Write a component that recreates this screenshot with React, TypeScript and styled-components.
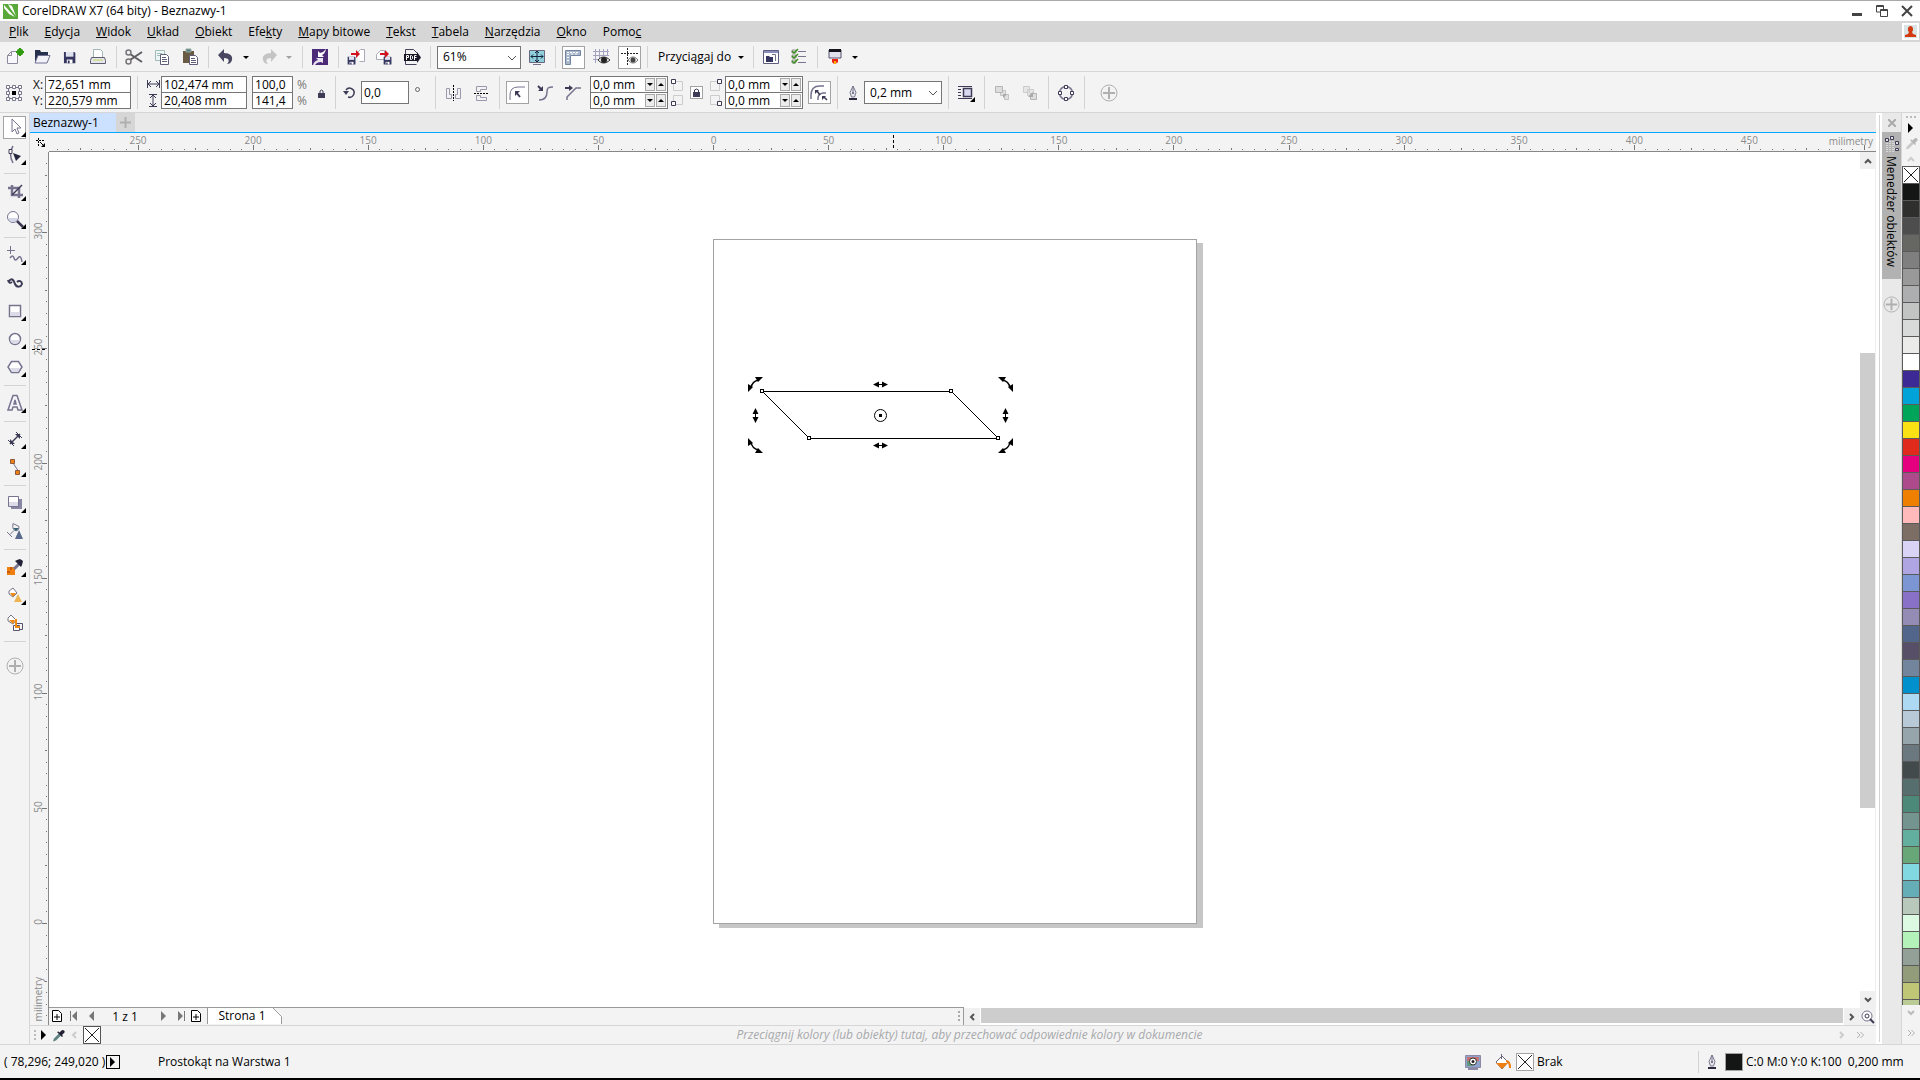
import React from "react";
import styled, { createGlobalStyle, css } from "styled-components";

const font = `"Open Sans", "Noto Sans", sans-serif`;
const ink = "#3d3b56";
const mid = "#77738f";
const pale = "#dcdce8";

const GlobalStyle = createGlobalStyle`
  *, *::before, *::after { box-sizing: border-box; }
  body { margin: 0; background: #f3f3f3; color: #000; font: 12px/16px ${font}; }
  button, input, select { font: inherit; color: inherit; margin: 0; padding: 0; border: 0; background: none; border-radius: 0; }
  svg { display: block; flex: none; }
`;

/* ---------- shell ---------- */

const Shell = styled.div`
  display: flex;
  flex-direction: column;
  height: 100vh;
  overflow: hidden;
  border-top: 1px solid #a9a9a9;
  border-bottom: 2px solid #000;
`;

const TitleBar = styled.header`
  display: flex;
  align-items: center;
  flex: none;
  height: 20px;
  padding: 0 1px 0 3px;
  background: #fff;
`;

const Title = styled.h1`
  flex: 1;
  margin: 0 0 0 4px;
  font-size: 12px;
  font-weight: 400;
`;

const WindowButton = styled.button`
  display: grid;
  place-items: center;
  width: 25px;
  height: 20px;
`;

const MenuBar = styled.nav`
  display: flex;
  align-items: center;
  flex: none;
  height: 21px;
  padding-left: 1px;
  background: #d6d6d6;
`;

const MenuItem = styled.button`
  height: 21px;
  padding: 0 8px;
`;

const UserButton = styled.button`
  display: grid;
  place-items: center;
  width: 17px;
  height: 17px;
  margin: 0 1px 0 auto;
  background: #fff;
`;

const Bar = styled.div<{ $h: number }>`
  display: flex;
  align-items: center;
  flex: none;
  height: ${(p) => p.$h}px;
  padding-top: 1px;
  border-bottom: 1px solid #d6d6d6;
`;

const Sep = styled.span<{ $h?: number }>`
  flex: none;
  width: 1px;
  height: ${(p) => p.$h ?? 22}px;
  margin: 0 3px 0 4px;
  background: #d3d3d3;
`;

const ToolButton = styled.button<{ $w?: number }>`
  display: grid;
  place-items: center;
  flex: none;
  width: ${(p) => p.$w ?? 28}px;
  height: 28px;
`;

const PressedFrame = styled.span`
  display: grid;
  place-items: center;
  width: 23px;
  height: 23px;
  border: 1px solid #a3a3a3;
  background: #fff;
`;

const ArrowButton = styled.button<{ $dim?: boolean }>`
  width: 15px;
  height: 22px;
  padding-left: 3px;
  &::after {
    content: "";
    display: block;
    width: 0;
    border: 3px solid transparent;
    border-top-color: ${(p) => (p.$dim ? "#a0a0a0" : "#000")};
    border-bottom: 0;
  }
`;

const SelectBox = styled.span<{ $w: number }>`
  position: relative;
  flex: none;
  width: ${(p) => p.$w}px;
  height: 23px;
  select {
    appearance: none;
    width: 100%;
    height: 100%;
    padding: 0 20px 0 5px;
    border: 1px solid #767676;
    background: #fff;
  }
  svg {
    position: absolute;
    right: 4px;
    top: 8px;
    pointer-events: none;
  }
`;

const SnapButton = styled.button`
  display: flex;
  align-items: center;
  gap: 7px;
  height: 23px;
  padding: 0 5px 0 7px;
  &::after {
    content: "";
    border: 3px solid transparent;
    border-top-color: #000;
    border-bottom: 0;
  }
`;

/* ---------- property bar ---------- */

const Pair = styled.div<{ $w: number }>`
  display: flex;
  flex-direction: column;
  flex: none;
  width: ${(p) => p.$w}px;
  border: 1px solid #767676;
  background: #fff;
  > * + * { border-top: 1px solid #767676; }
`;

const PairRow = styled.div<{ $last?: boolean }>`
  display: flex;
  align-items: center;
  gap: 1px;
  height: ${(p) => (p.$last ? 16 : 15)}px;
  padding-right: 1px;
  input { flex: 1; min-width: 0; height: 15px; padding: 1px 0 0 2px; }
`;

const SpinButton = styled.button<{ $up?: boolean }>`
  display: grid;
  place-items: center;
  width: 10px;
  height: 13px;
  border: 1px solid #a9a9a9;
  background: #ececec;
  &::after {
    content: "";
    border: 3px solid transparent;
    ${(p) => (p.$up ? css`border-bottom: 3px solid #000; border-top: 0;` : css`border-top: 3px solid #000; border-bottom: 0;`)}
  }
`;

const LabelStack = styled.div<{ $gap: number }>`
  display: flex;
  flex-direction: column;
  align-items: center;
  flex: none;
  gap: ${(p) => p.$gap}px;
  color: #111;
`;

const Percent = styled(LabelStack)`
  margin-left: 4px;
  color: #777;
`;

const AngleInput = styled.input`
  width: 48px;
  height: 23px;
  && {
    border: 1px solid #767676;
    padding-left: 2px;
    background: #fff;
  }
`;

const Spacer = styled.span<{ $w: number }>`
  flex: none;
  width: ${(p) => p.$w}px;
`;

const LockButton = styled.button`
  display: grid;
  place-items: center;
  flex: none;
  width: 13px;
  height: 13px;
  && {
    border: 1px solid #a3a3a3;
    background: #fff;
  }
`;

/* ---------- work area ---------- */

const Body = styled.div`
  display: flex;
  flex: 1;
  min-height: 0;
`;

const Toolbox = styled.aside`
  display: flex;
  flex-direction: column;
  align-items: center;
  flex: none;
  width: 30px;
  border-right: 1px solid #d6d6d6;
`;

const ToolSep = styled.span`
  width: 22px;
  height: 1px;
  margin: 4px 0 3px;
  background: #d3d3d3;
`;

const ToolSlot = styled.button`
  position: relative;
  display: grid;
  place-items: center;
  width: 28px;
  height: 28px;
`;

const Flyout = styled.i`
  position: absolute;
  right: 3px;
  bottom: 4px;
  border-left: 5px solid transparent;
  border-bottom: 5px solid #000;
`;

const Center = styled.main`
  display: flex;
  flex-direction: column;
  flex: 1;
  min-width: 0;
`;

const Tabs = styled.div`
  display: flex;
  flex: none;
  height: 20px;
  border-bottom: 1px solid #00a6ff;
  background: #e9e9e9;
`;

const DocTab = styled.button`
  && {
    width: 86px;
    padding-left: 3px;
    text-align: left;
    background: #cce1ff;
  }
`;

const AddTab = styled.button`
  display: grid;
  place-items: center;
  width: 19px;
  && { background: #d6d6d6; }
`;

const Work = styled.div`
  display: grid;
  grid-template: 19px minmax(0, 1fr) 17px / 19px minmax(0, 1fr) 16px;
  flex: 1;
  min-height: 0;
`;

const Corner = styled.div`
  display: grid;
  place-items: center;
  padding-left: 3px;
`;

const HRuler = styled.div`
  grid-column: 2 / 4;
  position: relative;
  overflow: hidden;
  border-bottom: 1px solid #878787;
  svg { width: 100%; height: 18px; }
`;

const VRuler = styled.div`
  grid-row: 2 / 4;
  position: relative;
  overflow: hidden;
  border-right: 1px solid #878787;
  svg { width: 18px; height: 100%; }
`;

const HUnit = styled.span`
  position: absolute;
  right: 3px;
  top: 0;
  color: #8b8b8b;
  font-size: 10px;
`;

const VUnit = styled.span`
  position: absolute;
  left: 0;
  bottom: 4px;
  color: #8b8b8b;
  font-size: 10px;
  writing-mode: vertical-rl;
  transform: rotate(180deg);
`;

const Canvas = styled.div`
  position: relative;
  overflow: hidden;
  background: #fff;
`;

const Sheet = styled.div`
  position: absolute;
  left: 664px;
  top: 87px;
  width: 484px;
  height: 685px;
  border: 1px solid #a3a3a3;
  background: #fff;
  box-shadow: 6px 4px 0 #c6c6c6;
  svg { position: absolute; left: -1px; top: -1px; overflow: visible; }
`;

const VScroll = styled.div`
  display: flex;
  flex-direction: column;
  justify-content: space-between;
  background: #fff;
  border-right: 1px solid #f0f0f0;
`;

const Thumb = styled.div`
  flex: 0 0 455px;
  background: #cdcdcd;
`;

const ScrollButton = styled.button`
  display: grid;
  place-items: center;
  flex: none;
  width: 16px;
  height: 17px;
  && { background: #f0f0f0; }
`;

const PageBar = styled.div`
  grid-column: 2 / 3;
  display: flex;
  min-width: 0;
`;

const PageNav = styled.div`
  display: flex;
  flex: 1 1 18px;
  border-top: 1px solid #999;
  border-right: 1px solid #999;
  margin-top: -1px;
  z-index: 1;
  background: #f3f3f3;
`;

const NavButton = styled.button<{ $w: number }>`
  display: grid;
  place-items: center;
  width: ${(p) => p.$w}px;
  height: 16px;
`;

const PageCount = styled.span`
  width: 52px;
  text-align: center;
  line-height: 18px;
`;

const PageTab = styled.button`
  position: relative;
  width: 75px;
  height: 16px;
  clip-path: polygon(0 0, 67px 0, 100% 8px, 100% 100%, 0 100%);
  && {
    padding-right: 6px;
    border-left: 1px solid #999;
    background: #fff;
  }
  svg { position: absolute; right: 0; top: 0; }
`;

const Grip = styled.span`
  margin: 2px 3px 0 auto;
`;

const HScroll = styled.div`
  display: flex;
  flex: 1 1 0;
  background: #fff;
`;

const HThumb = styled.div`
  flex: 1;
  margin: 0 1px;
  height: 15px;
  background: #cdcdcd;
`;

const DocPalette = styled.div`
  display: flex;
  align-items: center;
  flex: none;
  height: 19px;
  padding: 0 12px 0 4px;
  gap: 5px;
  border-top: 1px solid #d6d6d6;
`;

const Hint = styled.span`
  flex: 1;
  text-align: center;
  color: #a7a9ab;
  font-style: italic;
`;

const NoColor = styled.button`
  width: 18px;
  height: 18px;
  && {
    border: 1px solid #555;
    background: #fff;
  }
`;

/* ---------- right side ---------- */

const Splitter = styled.div`
  flex: none;
  width: 6px;
  background: #fff;
  &::after {
    content: "";
    display: block;
    width: 1px;
    height: calc(100% - 4px);
    margin: 2px 0 0 3px;
    background: #d3d3d3;
  }
`;

const Docker = styled.aside`
  display: flex;
  flex-direction: column;
  align-items: center;
  flex: none;
  width: 19px;
  background: #e9e9e9;
`;

const DockerClose = styled.button`
  display: grid;
  place-items: center;
  width: 19px;
  height: 19px;
`;

const DockerTab = styled.button`
  display: flex;
  flex-direction: column;
  align-items: center;
  width: 19px;
  height: 147px;
  gap: 4px;
  && {
    padding-top: 4px;
    background: #b2b2b2;
  }
  span { writing-mode: vertical-rl; line-height: 17px; }
`;

const AddControl = styled.button<{ $gap: number }>`
  && { margin-top: ${(p) => p.$gap}px; }
`;

const PaletteColumn = styled.aside`
  display: flex;
  flex-direction: column;
  align-items: center;
  flex: none;
  width: 19px;
  border-left: 1px solid #d6d6d6;
`;

const PaletteControl = styled.button<{ $h: number }>`
  display: grid;
  place-items: center;
  flex: none;
  width: 18px;
  height: ${(p) => p.$h}px;
`;

const SwatchList = styled.div`
  flex: 1;
  min-height: 0;
  width: 18px;
  overflow: hidden;
  padding-top: 1px;
  background: #5a5a5a;
`;

const Swatch = styled.button<{ $c: string }>`
  display: block;
  width: 16px;
  height: 16px;
  && {
    margin: 0 1px 1px;
    background: ${(p) => p.$c};
  }
`;

const Status = styled.footer`
  display: flex;
  align-items: center;
  flex: none;
  height: 34px;
  border-top: 1px solid #d6d6d6;
`;

const Coordinates = styled.output`
  width: 100px;
  padding-left: 4px;
  white-space: nowrap;
`;

const PlayButton = styled.button`
  display: grid;
  place-items: center;
  width: 14px;
  height: 14px;
  && {
    margin: 0 38px 0 6px;
    border: 1px solid #000;
  }
`;

const FillInfo = styled.div`
  display: flex;
  align-items: center;
  gap: 3px;
  width: 235px;
  margin-left: auto;
`;

const OutlineInfo = styled.div`
  display: flex;
  align-items: center;
  gap: 3px;
  width: 222px;
  height: 22px;
  padding-left: 3px;
  border-left: 1px solid #d3d3d3;
  white-space: pre;
`;

const ColorChip = styled.span<{ $c: string }>`
  width: 18px;
  height: 18px;
  border: 1px solid #a3a3a3;
  background: ${(p) => p.$c};
`;

/* ---------- icons ---------- */

const S = ({ children, w = 20, h = 20, vb }: { children: React.ReactNode; w?: number; h?: number; vb?: string }) => (
  <svg width={w} height={h} viewBox={vb ?? `0 0 ${w} ${h}`} fill="none" aria-hidden="true">{children}</svg>
);

const Cross = ({ size = 16, color = "#222" }) => (
  <S w={size} h={size} vb="0 0 16 16"><path d="M1 1l14 14M15 1L1 15" stroke={color} /></S>
);

const Plus = ({ size = 18 }) => (
  <S w={size} h={size} vb="0 0 18 18"><circle cx="9" cy="9" r="8" stroke="#b0b0b0" /><path d="M9 3v12M3 9h12" stroke="#b0b0b0" strokeWidth="2" /></S>
);

const Chevron = ({ d, color = "#555", w = 2 }: { d: "up" | "down" | "left" | "right"; color?: string; w?: number }) => {
  const paths = { up: "M1 6l3-3 3 3", down: "M1 2l3 3 3-3", left: "M6 1L3 4l3 3", right: "M2 1l3 3-3 3" };
  return <S w={8} h={8}><path d={paths[d]} stroke={color} strokeWidth={w} /></S>;
};

const SelectChevron = () => <S w={10} h={8}><path d="M1 2l4 4 4-4" stroke="#555" /></S>;

const Dropper = ({ dim = false }) => (
  <S w={13} h={13}>
    <path d="M1 12.500l1-3 5-5 2 2-5 5z" fill={dim ? "#c9c9c9" : "#5d8080"} />
    <path d="M5 3l5 5 1-1-1-1 2-2c2-2-1-4-2.500-2.500L7.500 3.500l-1-1z" fill={dim ? "#b5b5b5" : "#222033"} />
  </S>
);

const Pen = () => (
  <S w={10} h={16}>
    <path d="M5 1v6M5 1L2 7.500 3.500 12h3L8 7.500z" stroke="#77758c" fill="#e9e9f0" />
    <circle cx="5" cy="8" r="1" fill="#55536b" />
    <path d="M1 13h8v2H1z" fill="#2c2a40" />
  </S>
);

const Floppy = ({ x = 0, y = 0, s = 1 }) => (
  <g transform={`translate(${x} ${y}) scale(${s})`}>
    <path d="M1 1h11l1 1v11H1z" fill="#34365f" /><path d="M3 1h8v5H3z" fill="#dfe1ee" /><path d="M4 9h6v4H4z" fill="#fff" /><path d="M5 10h2v3H5z" fill="#34365f" />
  </g>
);

const icons: Record<string, React.ReactNode> = {
  new: <><path d="M3.500 8.500l4-4h6v12h-10z" fill="#f8f8fc" stroke="#8a8a9c" /><path d="M3.500 8.500h4v-4" stroke="#8a8a9c" /><path d="M16 1v8M12 5h8M13.500 2.500l5 5M18.500 2.500l-5 5" stroke="#2f9a10" strokeWidth="2" /></>,
  open: <><path d="M3 15V3h5l1 2h7v4H6z" fill="#26304d" /><path d="M6 8.500h12l-3 7.500H3z" fill="#f2f2f8" stroke="#6e7191" /></>,
  save: <Floppy x={3} y={4} s={0.95} />,
  print: <><path d="M5.500 10V2.500h7l2 2V10" fill="#fff" stroke="#9fb5b8" /><path d="M3.500 10.500h13l1 3v3h-15v-3z" fill="#e6e6ee" stroke="#5e5c70" /><path d="M5 12h10v2H5z" fill="#d3dfa0" /></>,
  cut: <><path d="M6 7l12 8M6 13L18 5" stroke="#5f5d62" strokeWidth="2" /><circle cx="4.500" cy="5.500" r="2.500" stroke="#77757a" strokeWidth="1.500" /><circle cx="4.500" cy="14.500" r="2.500" stroke="#77757a" strokeWidth="1.500" /></>,
  copy: <><path d="M3.500 3.500h9v10h-9z" fill="#eef5f5" stroke="#9fbcbc" /><path d="M5 6.500h5M5 8.500h3" stroke="#9fbcbc" /><path d="M8.500 7.500h6l2 2v8h-8z" fill="#fff" stroke="#5f5d78" /><path d="M10 10.500h4M10 12.500h5M10 14.500h5" stroke="#5f5d78" /></>,
  paste: <><path d="M3 4h11v12H3z" fill="#6a5a44" /><path d="M6 2h5v3H6z" fill="#5f7f7a" stroke="#8fa8a4" /><path d="M9.500 8.500h6l2 2v7h-8z" fill="#fff" stroke="#5f5d78" /><path d="M11 11.500h4M11 13.500h5M11 15.500h5" stroke="#5f5d78" /></>,
  undo: <path d="M2 8l6-6v4c6 0 9 3 8 7-1 3-3 4-5 4 3-3 2-6-3-6v4z" fill="#484660" />,
  redo: <path d="M18 8l-6-6v4c-6 0-9 3-8 7 1 3 3 4 5 4-3-3-2-6 3-6v4z" fill="#c4c4c4" />,
  connect: <><path d="M2 2h16v16H2z" fill="#4b2a78" /><path d="M16 2q-1 5-4 6l2 2H8V4l2 2q4-1 6-4z" fill="#fff" /><path d="M3 18q1-4 5-5l-2-2h7v5l-2-1q-4 0-6 3z" fill="#e9e2f3" /></>,
  import: <><path d="M10.500 6.500l4-4h4v12h-5" fill="#fff" stroke="#aaa9b8" /><Floppy x={1} y={9} s={0.65} /><path d="M5 6h5V3l4 4-4 4V8H5z" fill="#d2121c" /></>,
  export: <><path d="M2.500 7.500l4-4h4v9h-8z" fill="#fff" stroke="#aaa9b8" /><Floppy x={9} y={9} s={0.65} /><path d="M6 6h5V3l4 4-4 4V8H6z" fill="#d2121c" /></>,
  pdf: <><path d="M3.500 7V2.500h8l4 4M3.500 14v3.500h11" stroke="#44425a" /><path d="M2 7h13V5l4 5.500-4 5.500v-2H2z" fill="#191827" /><path d="M4.500 13V8.500h2v2h-2M8.500 8.500v4h1l1-1v-2l-1-1zM12.500 13V8.500h2M12.500 10.500h2" stroke="#fff" /></>,
  fullscreen: <><path d="M2.500 3.500h15v12h-15z" fill="#8fd0dc" stroke="#696780" /><path d="M10 4v11M4 9.500h12M8 6l2-2 2 2M8 13l2 2 2-2M6 7.500l-2 2 2 2M14 7.500l2 2-2 2" stroke="#15233a" /><path d="M6 17.500h8" stroke="#77758a" /></>,
  rulers: <><path d="M2.500 3.500h15v5h-10v9h-5z" fill="#a9b8cc" stroke="#7484a0" /><path d="M4 5.500h12M4 7.500h2M4 10.500h2M4 13.500h2M8 7h2M12 7h2" stroke="#fff" strokeDasharray="2 1" /></>,
  grid: <><path d="M2 4.500h16M2 8.500h16M2 12.500h8M4.500 2v14M8.500 2v12M12.500 2v7M16.500 2v7" stroke="#a3a3c0" /><path d="M7 13c3-4 8-4 12 0-4 4-9 4-12 0z" fill="#ddd" stroke="#333" /><circle cx="13" cy="13" r="3" fill="#222" /></>,
  guides: <><path d="M8.500 1v18M2 6.500h17" stroke="#222" strokeDasharray="2 1" /><path d="M9 13c3-4 7-4 10 0-3 4-7 4-10 0z" fill="#eee" stroke="#777" /><circle cx="14" cy="13" r="2.500" fill="#444" /></>,
  options: <><path d="M2.500 3.500h15v13h-15z" fill="#fff" stroke="#5f5d80" /><path d="M3 4h14v2H3z" fill="#8a90bb" /><path d="M5 9h3l1 1h3v5H5z" fill="#34365f" /><path d="M11 7.500h3.500V14" stroke="#77758a" /></>,
  checks: <><path d="M3 3h4v3H3zM3 8h4v3H3zM3 13h4v3H3z" fill="#ddd" stroke="#999" /><path d="M9 4.500h8M9 9.500h8M9 15.500h8" stroke="#77758f" /><path d="M3 4l2 2 4-4M3 9l2 2 4-4M3 14l2 2 4-4" stroke="#3b8f1c" strokeWidth="1.500" /></>,
  launch: <><path d="M4 3h12v8H4z" fill="#dfe0ec" stroke="#55536d" /><path d="M4 2h12v3H4z" fill="#14131c" /><path d="M7 12h6v4l-1-1-1 2H9l-2-2z" fill="#f02010" /><path d="M9 14h2v3H9z" fill="#ffb000" /></>,
  origin: <><path d="M4.500 4.500h11v11h-11z" stroke="#77758a" /><path d="M2.500 2.500h3v3h-3zM8.500 2.500h3v3h-3zM14.500 2.500h3v3h-3zM2.500 8.500h3v3h-3zM14.500 8.500h3v3h-3zM2.500 14.500h3v3h-3zM8.500 14.500h3v3h-3zM14.500 14.500h3v3h-3z" fill="#fff" stroke="#77758a" /><path d="M8 8h4v4H8z" fill="#000" /></>,
  width: <path d="M2.500 6v8M14.500 6v8M3 10h11M6 7l-3 3 3 3M11 7l3 3-3 3" stroke={ink} />,
  rotate: <><path d="M6 7a4.500 4.500 0 1 1 2 7" stroke={ink} strokeWidth="1.500" /><path d="M3 8h6l-3 4z" fill={ink} /></>,
  lock: <><path d="M7 10h7v5H7z" fill={ink} /><path d="M9 10V8q1.500-2 3 0v2" stroke={ink} /></>,
  mirrorH: <><path d="M3.500 5.500v10h5v-4h-2v-6zM17.500 5.500v10h-5v-4h2v-6z" stroke="#9a98aa" /><path d="M10.500 2v16" stroke="#000" strokeDasharray="2 1" /></>,
  mirrorV: <><path d="M15.500 3.500h-10v5h4v-2h6zM15.500 17.500h-10v-5h4v2h6z" stroke="#9a98aa" /><path d="M3 10.500h15" stroke="#000" strokeDasharray="2 1" /></>,
  round: <><path d="M3 17v-5q0-8 8-8h7" stroke={mid} /><path d="M8 8h5l-5 5z" fill={ink} /><path d="M9 9l4 5" stroke={ink} strokeWidth="2" /></>,
  scallop: <><path d="M4 17c6 0 8-3 8-8 0-4 1-5 6-5" stroke={mid} strokeWidth="1.500" /><path d="M3 3l4 4" stroke={ink} strokeWidth="2" /><path d="M8 3v5H3z" fill={ink} /></>,
  chamfer: <><path d="M4 17v-3l9-9h5" stroke={mid} strokeWidth="1.500" /><path d="M2 5h5" stroke={ink} strokeWidth="2" /><path d="M6 2l4 3-4 3z" fill={ink} /></>,
  relative: <><path d="M2 16v-4Q2 3 11 3h4M9 17v-2q0-4 5-5h3" stroke={mid} strokeWidth="1.500" /><path d="M6 7h4l-4 4zM13 13h4l-4 4z" fill={ink} /><path d="M8 8l3 4M15 14l3 3" stroke={ink} strokeWidth="1.500" /></>,
  wrap: <><path d="M2 3.500h14M2 6.500h3M2 9.500h3M2 12.500h3M2 15.500h14" stroke={ink} /><path d="M7.500 5.500h8v8h-8z" fill="#d9d9f0" stroke={ink} strokeWidth="1.500" /><path d="M19 14v5h-5z" fill="#000" /></>,
  front: <><path d="M8.500 7.500h5v5h-5zM12.500 11.500h4v5h-4z" fill="#e0e0e0" stroke="#c3c3c3" /><path d="M3.500 3.500h7v6h-7z" fill="#ddd" stroke="#b5b5b5" /><path d="M11 11h4l-4 4z" fill="#aaa" /></>,
  back: <><path d="M3.500 3.500h6v6h-6zM7.500 6.500h6v6h-6z" fill="#e6e6e6" stroke="#ccc" /><path d="M10.500 10.500h6v6h-6z" fill="#ddd" stroke="#b5b5b5" /><path d="M13 9v5H8z" fill="#aaa" /></>,
  curve: <><circle cx="10" cy="10" r="6.500" stroke={mid} strokeWidth="1.500" /><path d="M8.500 2.500h3v3h-3zM8.500 14.500h3v3h-3zM2.500 8.500h3v3h-3zM14.500 8.500h3v3h-3z" fill="#fff" stroke={ink} /></>,
  pick: <path d="M7 2v13l3-3 2 5 2-1-2-5h4z" fill="#fff" stroke="#77758f" />,
  shape: <><path d="M8 1Q3 9 8 18" stroke={mid} strokeWidth="1.500" /><path d="M4 4.500h3v4H4z" fill="#fff" stroke={ink} /><path d="M8 8l8 3-5 5z" fill="#26283f" /></>,
  crop: <><path d="M7 4v10h11M3 7h11v10" stroke={mid} strokeWidth="2.500" /><path d="M17 4L7 14" stroke={ink} strokeWidth="1.500" /></>,
  zoom: <><circle cx="8" cy="8" r="5.500" fill="#fff" stroke={mid} /><path d="M3.500 9h9q-1 4-4.500 4t-4.500-4z" fill="#d3d6e6" /><path d="M12 12l6 6" stroke={ink} strokeWidth="2.500" /></>,
  freehand: <><path d="M5.500 1v8M2 5.500h8" stroke={mid} /><path d="M5 13q3-4 4 0t4 0 4 4" stroke={mid} strokeWidth="1.500" /></>,
  art: <path d="M4 8c3-4 5 0 6 3 2 4 6 3 7 0 0-3-3-4-5-2M3 7q1 4 4 2" stroke={ink} strokeWidth="2" />,
  rect: <><path d="M4.500 4.500h11v11h-11z" fill="#fff" stroke={mid} strokeWidth="1.500" /><path d="M5 11h10v4H5z" fill={pale} /></>,
  ellipse: <><circle cx="10" cy="10" r="5.500" fill="#fff" stroke={mid} strokeWidth="1.500" /><path d="M5 11h10q-1 4-5 4t-5-4z" fill={pale} /></>,
  polygon: <><path d="M6.500 4.500h7l3.500 5.500-3.500 5.500h-7L3 10z" fill="#fff" stroke={mid} strokeWidth="1.500" /><path d="M5 11h10l-2 4H7z" fill={pale} /></>,
  text: <path d="M8 2.500h4l5 14.500h-4l-1-3H8l-1 3H3zM10 7l-1 4h2z" fill="#f4f4fa" stroke={mid} strokeWidth="1.500" />,
  dimension: <><path d="M5 15L15 5" stroke={ink} strokeWidth="1.500" /><path d="M3 11l6 6M11 3l6 6" stroke={ink} /><path d="M5 10v5h5zM10 5h5v5z" fill={ink} /></>,
  connector: <><path d="M8 6l6 9" stroke={mid} /><path d="M5.500 2.500h4v4h-4zM10.500 13.500h4v4h-4z" fill="#f08010" stroke="#8a5a40" /></>,
  shadow: <><path d="M6 6h11v10H6z" fill="#8886a5" /><path d="M3.500 3.500h10v10h-10z" fill="#fff" stroke={mid} /><path d="M4 9h9v4H4z" fill={pale} /></>,
  glass: <><path d="M8 2.500l6 3q0 5-4 4-3-1-2-7zM9 9.500l-4 4M2 11l5 5" stroke={mid} /><path d="M8 7l6 0-3 3z" fill="#356070" /><path d="M14 9l4 9h-8z" fill="#596a8c" /></>,
  picker: <><path d="M2 10h8v8H2z" fill="#ef7f10" /><path d="M5 10h2v3H5zM2 14h3v2H2z" fill="#c65a0a" /><path d="M9 12l5-5" stroke={mid} strokeWidth="3" /><path d="M10 4l6 6 1-2 1-4-3-2-3 1z" fill="#242238" /></>,
  fill: <><path d="M4 6l4-3 4 5-4 4-4-3z" fill="#fff" stroke="#77758a" /><path d="M5 8h6l-3 4z" fill="#ef8a10" /><path d="M13 9l4 8H9z" fill="#edb552" /></>,
  smart: <><path d="M3 5l3-3 5 5-3 4-5-3z" fill="#fff" stroke="#77758a" /><path d="M4 7h6l-2 4z" fill="#ef8a10" /><path d="M11.500 10.500h6v6h-6z" stroke="#55536d" /><path d="M8.500 12.500h6v5h-6z" fill="#fff" stroke="#55536d" /><path d="M11 6v8h4" stroke="#ef8a10" strokeWidth="2" /></>,
  screen: <><path d="M2.500 3.500h15v12h-15z" fill="#8fa4cc" stroke="#8c8aa6" /><path d="M4 5h12v4H4z" fill="#c4716f" /><path d="M4 9h6v5H4z" fill="#5f9a7a" /><circle cx="10" cy="9.500" r="3.500" fill="#fff" stroke="#333" /><circle cx="10" cy="9.500" r="1.500" fill="#222" /><path d="M5 17h10" stroke="#8c8aa6" strokeWidth="2" /></>,
  bucket: <><path d="M3 10l6-6 6 6-6 7z" fill="#fff" stroke="#696780" /><path d="M3 11h12l-6 6z" fill="#ef7f10" /><path d="M8.500 2v5" stroke="#696780" /><path d="M13 9q4 0 4 7" stroke="#ef7f10" strokeWidth="2" /></>,
};

const Icon = ({ name }: { name: string }) => <S>{icons[name]}</S>;

const Tool = ({ name, label, pressed, w }: { name: string; label: string; pressed?: boolean; w?: number }) => (
  <ToolButton aria-label={label} aria-pressed={pressed} $w={w}>
    {pressed ? <PressedFrame><Icon name={name} /></PressedFrame> : <Icon name={name} />}
  </ToolButton>
);

/* ---------- rulers ---------- */

const STEP = 11.51;
const range = (from: number, to: number) => Array.from({ length: to - from + 1 }, (_, i) => from + i);

const HorizontalScale = ({ zero }: { zero: number }) => (
  <svg shapeRendering="crispEdges" aria-hidden="true">
    {range(-57, 120).map((i) => {
      const x = Math.floor(zero + i * STEP);
      const len = i % 10 === 0 ? 5 : i % 5 === 0 ? 2 : 1;
      return <rect key={i} x={x} y={17 - len} width="1" height={len} fill="#777" />;
    })}
    {range(-5, 9).map((i) => (
      <text key={i} x={zero + i * STEP * 10} y="11" textAnchor="middle" fontSize="10" fill="#8b8b8b">{Math.abs(i * 50)}</text>
    ))}
    <path d="M844.500 2v15" stroke="#000" strokeDasharray="3 2" />
  </svg>
);

const VerticalScale = ({ zero }: { zero: number }) => (
  <svg shapeRendering="crispEdges" aria-hidden="true">
    {range(-8, 66).map((i) => {
      const y = Math.floor(zero - i * STEP);
      const len = i % 10 === 0 ? 5 : i % 5 === 0 ? 2 : 1;
      return <rect key={i} x={17 - len} y={y} width={len} height="1" fill="#777" />;
    })}
    {range(0, 6).map((i) => (
      <text key={i} transform={`translate(12 ${Math.floor(zero - i * STEP * 10) - 1}) rotate(-90)`} textAnchor="middle" fontSize="10" fill="#8b8b8b">{i * 50}</text>
    ))}
    <path d="M2 197.500h15" stroke="#000" strokeDasharray="3 2" />
  </svg>
);

/* ---------- selected object ---------- */

const RotateHandle = ({ x, y, sx, sy }: { x: number; y: number; sx: number; sy: number }) => (
  <g transform={`translate(${x} ${y}) scale(${sx} ${sy})`}>
    <path d="M3 11Q4 4 11 3" stroke="#000" strokeWidth="1.500" />
    <path d="M0 15V7l5 3zM15 0H7l3 5z" fill="#000" />
  </g>
);

const StretchHandle = ({ x, y, turn = 0 }: { x: number; y: number; turn?: number }) => (
  <g transform={`translate(${x} ${y}) rotate(${turn})`}>
    <path d="M-5 0H5" stroke="#000" /><path d="M-7.500 0l6-3v6zM7.500 0l-6-3v6z" fill="#000" />
  </g>
);

const Selection = () => (
  <svg width="484" height="685" fill="none" aria-label="Prostokąt">
    <path d="M49 152.500h189M96 199.500h189" stroke="#000" />
    <path d="M49 152l47 47M238 152l47 47" stroke="#000" />
    {[[49, 152], [238, 152], [96, 199], [285, 199]].map(([x, y]) => (
      <rect key={x} x={x - 1.5} y={y - 1.5} width="3" height="3" fill="#fff" stroke="#000" />
    ))}
    <circle cx="167.500" cy="176.500" r="6" stroke="#000" />
    <rect x="166" y="175" width="3" height="3" fill="#000" />
    <StretchHandle x={167.5} y={145.5} />
    <StretchHandle x={167.5} y={206.5} />
    <StretchHandle x={42.5} y={176.5} turn={90} />
    <StretchHandle x={292.5} y={176.5} turn={90} />
    <RotateHandle x={35} y={138} sx={1} sy={1} />
    <RotateHandle x={300} y={138} sx={-1} sy={1} />
    <RotateHandle x={35} y={214} sx={1} sy={-1} />
    <RotateHandle x={300} y={214} sx={-1} sy={-1} />
  </svg>
);

/* ---------- data ---------- */

const menus: [string, string, string][] = [
  ["", "P", "lik"], ["", "E", "dycja"], ["", "W", "idok"], ["", "U", "kład"], ["", "O", "biekt"], ["Efe", "k", "ty"],
  ["", "M", "apy bitowe"], ["", "T", "ekst"], ["", "T", "abela"], ["", "N", "arzędzia"], ["", "O", "kno"], ["Pomo", "c", ""],
];

const tools: [string, string, boolean][][] = [
  [["shape", "Kształt", true]],
  [["crop", "Kadrowanie", true], ["zoom", "Powiększenie", true]],
  [["freehand", "Krzywa", true], ["art", "Środki artystyczne", false], ["rect", "Prostokąt", true], ["ellipse", "Elipsa", true], ["polygon", "Wielokąt", true]],
  [["text", "Tekst", true]],
  [["dimension", "Wymiar", true], ["connector", "Łącznik", true]],
  [["shadow", "Cień", true], ["glass", "Przezroczystość", false]],
  [["picker", "Zakraplacz", true], ["fill", "Wypełnienie", true], ["smart", "Inteligentne wypełnienie", false]],
];

const swatches = `141615 2f2f2d 4d4d4d 666663 7f7f7f 999999 acaeb0 c1c4c3 d8dad9 ebebea ffffff 3c2996 00a3d7 00a55a fae114 df2a1c
e4007f ad4a8b ef7f00 feb9bb 7d6e65 d9d4f5 afa5e3 7c95d3 8971c8 948cb5 52658b 574f68 73859c 0091cc addaf2 b8cad7 96a4ab 6c7880
434a4c 566e6e 4d8978 749490 62ae9f 68a878 82d8e0 65adb7 b8c8bb dcfae2 b3f2b8 93a097 929b7a bfc776 bacb96`.split(/\s+/);

const SpinPair = ({ name }: { name: string }) => (
  <Pair $w={78}>
    {[1, 2].map((n) => (
      <PairRow key={n} $last={n === 2}>
        <input aria-label={`${name} ${n}`} defaultValue="0,0 mm" />
        <SpinButton aria-label="Mniej" />
        <SpinButton $up aria-label="Więcej" />
      </PairRow>
    ))}
  </Pair>
);

const FieldPair = ({ w, ids, values }: { w: number; ids: string[]; values: string[] }) => (
  <Pair $w={w}>
    {values.map((v, i) => (
      <PairRow key={v} $last={i === 1}><input id={ids[i]} aria-label={ids[i]} defaultValue={v} /></PairRow>
    ))}
  </Pair>
);

const CornerMarks = ({ flip = false }) => (
  <S w={12} h={28}>
    <g transform={flip ? "translate(12 0) scale(-1 1)" : undefined}>
      <path d="M2.500 3v8.500h9V2.500H5M2.500 24v-7.500h9v9H5" stroke="#ccc" />
      <path d="M.5.500h4v4h-4zM.5 22.500h4v4h-4z" fill="#fff" stroke={ink} />
    </g>
  </S>
);

const Triangle = ({ left = false, bar = false, color = "#777" }) => (
  <S w={9} h={10}>
    <g transform={left ? "translate(9 0) scale(-1 1)" : undefined}>
      <path d="M1 0l5 5-5 5z" fill={color} />{bar && <path d="M7.500 0v10" stroke={color} />}
    </g>
  </S>
);

const AddPage = () => <S w={10} h={12}><path d="M.5.500h6l3 3v8h-9z" fill="#fff" stroke="#000" /><path d="M5 4v6M2 7h6" stroke="#000" /></S>;

const BlackTriangle = () => <S w={6} h={10}><path d="M0 0l5 5-5 5z" fill="#000" /></S>;

const DoubleChevron = () => <S w={8} h={8}><path d="M1 1l3 3-3 3M4.500 1l3 3-3 3" stroke="#b0b0b0" /></S>;

/* ---------- application ---------- */

export default function App() {
  return (
    <>
      <GlobalStyle />
      <Shell>
        <TitleBar>
          <S w={15} h={15}><path d="M0 0h15v15H0z" fill="#58a83a" /><path d="M1 1l11 12L6 10 1 4zM5 0l4 2 4 10L7 4z" fill="#fff" /></S>
          <Title>CorelDRAW X7 (64 bity) - Beznazwy-1</Title>
          <WindowButton aria-label="Minimalizuj"><S w={12} h={12}><path d="M1 8h10v3H1z" fill="#444" /></S></WindowButton>
          <WindowButton aria-label="Przywróć"><S w={12} h={12}><path d="M4 7H.5V.500h7V4M.5 1.500h7M4.500 4.500h7v7h-7zM4 5.500h8" stroke="#444" /></S></WindowButton>
          <WindowButton aria-label="Zamknij"><S w={12} h={12}><path d="M1 1l10 10M11 1L1 11" stroke="#444" strokeWidth="2" /></S></WindowButton>
        </TitleBar>

        <MenuBar>
          {menus.map(([a, b, c]) => <MenuItem key={a + b + c}>{a}<u>{b}</u>{c}</MenuItem>)}
          <UserButton aria-label="Konto"><S w={13} h={13}><path d="M0 0h13v13H0z" fill="#d9e4e4" /><path d="M5 7C3 5 4 1 6.500 1S10 5 8 7l1 2 3 1v2H1v-2l3-1z" fill="#d43a10" /></S></UserButton>
        </MenuBar>

        <Bar $h={30}>
          <Tool name="new" label="Nowy" /><Tool name="open" label="Otwórz" /><Tool name="save" label="Zapisz" /><Tool name="print" label="Drukuj" />
          <Sep />
          <Tool name="cut" label="Wytnij" /><Tool name="copy" label="Kopiuj" /><Tool name="paste" label="Wklej" />
          <Sep />
          <Tool name="undo" label="Cofnij" /><ArrowButton aria-label="Lista cofania" />
          <Tool name="redo" label="Przywróć" /><ArrowButton $dim aria-label="Lista przywracania" />
          <Sep />
          <Tool name="connect" label="Connect" />
          <Sep />
          <Tool name="import" label="Importuj" /><Tool name="export" label="Eksportuj" /><Tool name="pdf" label="Publikuj do PDF" />
          <Sep />
          <Spacer $w={3} />
          <SelectBox $w={84}><select aria-label="Powiększenie"><option>61%</option></select><SelectChevron /></SelectBox>
          <Spacer $w={2} />
          <Tool name="fullscreen" label="Pełny ekran" />
          <Sep />
          <Tool name="rulers" label="Linijki" pressed /><Tool name="grid" label="Siatka" /><Tool name="guides" label="Prowadnice" pressed />
          <Sep />
          <SnapButton>Przyciągaj do</SnapButton>
          <Sep />
          <Tool name="options" label="Opcje" /><Tool name="checks" label="Ustawienia" />
          <Sep />
          <Tool name="launch" label="Uruchom" /><ArrowButton aria-label="Lista programów" />
        </Bar>

        <Bar $h={41}>
          <ToolButton aria-label="Początek obiektu"><Icon name="origin" /></ToolButton>
          <Spacer $w={5} />
          <LabelStack $gap={0}><label htmlFor="X">X:</label><label htmlFor="Y">Y:</label></LabelStack>
          <Spacer $w={2} />
          <FieldPair w={86} ids={["X", "Y"]} values={["72,651 mm", "220,579 mm"]} />
          <Spacer $w={2} />
          <Sep $h={33} />
          <Spacer $w={4} />
          <LabelStack $gap={1}>
            <S w={16} h={14} vb="0 3 16 14">{icons.width}</S>
            <S w={16} h={16} vb="0 2 16 16"><g transform="translate(18 2) rotate(90)">{icons.width}</g></S>
          </LabelStack>
          <FieldPair w={86} ids={["Szerokość", "Wysokość"]} values={["102,474 mm", "20,408 mm"]} />
          <Spacer $w={5} />
          <FieldPair w={41} ids={["Skala X", "Skala Y"]} values={["100,0", "141,4"]} />
          <Percent $gap={0}><span>%</span><span>%</span></Percent>
          <Spacer $w={4} />
          <Tool name="lock" label="Zablokuj proporcje" w={20} />
          <Sep $h={33} />
          <ToolButton as="label" htmlFor="angle" $w={22}><Icon name="rotate" /></ToolButton>
          <AngleInput id="angle" aria-label="Kąt obrotu" defaultValue="0,0" />
          <Spacer $w={5} />
          <S w={7} h={16}><circle cx="3.500" cy="4.500" r="2" stroke="#666" /></S>
          <Spacer $w={10} />
          <Sep $h={33} />
          <Tool name="mirrorH" label="Odbicie w poziomie" /><Tool name="mirrorV" label="Odbicie w pionie" />
          <Sep $h={33} />
          <Tool name="round" label="Narożnik okrągły" pressed /><Tool name="scallop" label="Narożnik wklęsły" /><Tool name="chamfer" label="Narożnik ścięty" />
          <Spacer $w={3} />
          <SpinPair name="Promień lewy" />
          <Spacer $w={3} />
          <CornerMarks />
          <Spacer $w={7} />
          <LockButton aria-label="Edytuj narożniki razem"><S w={9} h={9}><path d="M1 4h7v5H1z" fill={ink} /><path d="M2.500 4V2q2-2 4 0v2" stroke={ink} /></S></LockButton>
          <Spacer $w={7} />
          <CornerMarks flip />
          <Spacer $w={3} />
          <SpinPair name="Promień prawy" />
          <Spacer $w={2} />
          <Tool name="relative" label="Skalowanie względne" pressed />
          <Sep $h={33} />
          <Spacer $w={7} />
          <Pen />
          <Spacer $w={6} />
          <SelectBox $w={78}><select aria-label="Szerokość konturu"><option>0,2 mm</option></select><SelectChevron /></SelectBox>
          <Spacer $w={2} />
          <Sep $h={33} />
          <Tool name="wrap" label="Zawijaj tekst" />
          <Sep $h={33} />
          <Tool name="front" label="Na wierzch" /><Tool name="back" label="Na spód" />
          <Sep $h={33} />
          <Tool name="curve" label="Konwertuj na krzywe" />
          <Sep $h={33} />
          <Spacer $w={7} />
          <ToolButton aria-label="Dostosuj"><Plus /></ToolButton>
        </Bar>

        <Body>
          <Toolbox>
            <ToolSlot aria-label="Wskaźnik"><PressedFrame><Icon name="pick" /></PressedFrame><Flyout /></ToolSlot>
            {tools.map((group, g) => (
              <React.Fragment key={g}>
                {group.map(([name, label, flyout]) => (
                  <ToolSlot key={name} aria-label={label}><Icon name={name} />{flyout && <Flyout />}</ToolSlot>
                ))}
                <ToolSep />
              </React.Fragment>
            ))}
            <AddControl $gap={12} aria-label="Dostosuj"><Plus /></AddControl>
          </Toolbox>

          <Center>
            <Tabs>
              <DocTab>Beznazwy-1</DocTab>
              <AddTab aria-label="Nowy dokument"><S w={11} h={11}><path d="M5.500 0v11M0 5.500h11" stroke="#b0b0b0" strokeWidth="2" /></S></AddTab>
            </Tabs>
            <Work>
              <Corner><S w={10} h={10}><path d="M0 2.500h9M2.500 0v9" stroke="#000" strokeDasharray="2 1" /><path d="M4 4l4 4" stroke="#000" /><path d="M9 5v4H5z" fill="#000" /></S></Corner>
              <HRuler><HorizontalScale zero={664.5} /><HUnit>milimetry</HUnit></HRuler>
              <VRuler><VerticalScale zero={771.5} /><VUnit>milimetry</VUnit></VRuler>
              <Canvas><Sheet><Selection /></Sheet></Canvas>
              <VScroll>
                <ScrollButton aria-label="W górę"><Chevron d="up" /></ScrollButton>
                <Thumb />
                <ScrollButton aria-label="W dół"><Chevron d="down" /></ScrollButton>
              </VScroll>
              <PageBar>
                <PageNav>
                  <NavButton $w={16} aria-label="Dodaj stronę przed"><AddPage /></NavButton>
                  <NavButton $w={17} aria-label="Pierwsza strona"><Triangle left bar /></NavButton>
                  <NavButton $w={17} aria-label="Poprzednia strona"><Triangle left /></NavButton>
                  <PageCount>1 z 1</PageCount>
                  <NavButton $w={26} aria-label="Następna strona"><Triangle /></NavButton>
                  <NavButton $w={8} aria-label="Ostatnia strona"><Triangle bar /></NavButton>
                  <NavButton $w={22} aria-label="Dodaj stronę po"><AddPage /></NavButton>
                  <PageTab>Strona 1<S w={9} h={16}><path d="M0 0l8.500 8.500V16" stroke="#999" /></S></PageTab>
                  <Grip><S w={2} h={12}><path d="M1 1v12" stroke="#aaa" strokeWidth="2" strokeDasharray="2 2" /></S></Grip>
                </PageNav>
                <HScroll>
                  <ScrollButton aria-label="W lewo"><Chevron d="left" /></ScrollButton>
                  <HThumb />
                  <ScrollButton aria-label="W prawo"><Chevron d="right" /></ScrollButton>
                </HScroll>
              </PageBar>
              <ScrollButton aria-label="Nawigator"><S w={14} h={14}><circle cx="6" cy="6" r="5" fill="#fff" stroke={mid} /><circle cx="6" cy="6" r="2" stroke={ink} /><path d="M9 9l4 4" stroke={ink} strokeWidth="2" /></S></ScrollButton>
            </Work>
            <DocPalette>
              <S w={2} h={12}><path d="M1 1v12" stroke="#bbb" strokeWidth="2" strokeDasharray="2 2" /></S>
              <BlackTriangle />
              <Dropper />
              <Chevron d="left" color="#ccc" />
              <NoColor aria-label="Brak koloru"><Cross /></NoColor>
              <Hint>Przeciągnij kolory (lub obiekty) tutaj, aby przechować odpowiednie kolory w dokumencie</Hint>
              <Chevron d="right" color="#ccc" />
              <Spacer $w={0} />
              <DoubleChevron />
            </DocPalette>
          </Center>

          <Splitter />
          <Docker>
            <DockerClose aria-label="Zamknij panel"><S w={8} h={8}><path d="M0 0l8 8M8 0L0 8" stroke="#aaa" strokeWidth="2" /></S></DockerClose>
            <DockerTab>
              <S w={14} h={16}><path d="M.5 2.500h3v3h-3zM5.500.500h3v3h-3zM10.500 5.500h3v3h-3zM10.500 12.500h3v2h-3z" fill="#ddd" stroke={ink} /><path d="M2 7v9M5 5v11M8 5v11M4 2h1M9 8h1M9 13h1" stroke="#fff" strokeDasharray="1 1" /></S>
              <span>Menedżer obiektów</span>
            </DockerTab>
            <AddControl $gap={17} aria-label="Dodaj panel"><Plus size={17} /></AddControl>
          </Docker>
          <PaletteColumn>
            <PaletteControl $h={8} aria-label="Uchwyt palety"><S w={10} h={2}><path d="M0 1h10" stroke="#bbb" strokeWidth="2" strokeDasharray="2 2" /></S></PaletteControl>
            <PaletteControl $h={13} aria-label="Menu palety"><BlackTriangle /></PaletteControl>
            <PaletteControl $h={18} aria-label="Kroplomierz"><Dropper dim /></PaletteControl>
            <PaletteControl $h={14} aria-label="Przewiń w górę"><Chevron d="up" color="#ccc" /></PaletteControl>
            <SwatchList>
              <Swatch $c="#fff" aria-label="Brak koloru"><Cross /></Swatch>
              {swatches.map((c) => <Swatch key={c} $c={`#${c}`} aria-label={`#${c}`} />)}
            </SwatchList>
            <PaletteControl $h={16} aria-label="Przewiń w dół"><Chevron d="down" color="#bbb" /></PaletteControl>
            <PaletteControl $h={23} aria-label="Rozwiń paletę"><DoubleChevron /></PaletteControl>
          </PaletteColumn>
        </Body>

        <Status>
          <Coordinates>( 78,296; 249,020 )</Coordinates>
          <PlayButton aria-label="Opcje wyświetlania"><BlackTriangle /></PlayButton>
          <span>Prostokąt na Warstwa 1</span>
          <FillInfo>
            <Icon name="screen" /><Spacer $w={4} /><Icon name="bucket" />
            <ColorChip $c="#fff"><Cross /></ColorChip>Brak
          </FillInfo>
          <OutlineInfo>
            <Spacer $w={2} /><Pen /><Spacer $w={2} /><ColorChip $c="#141615" />C:0 M:0 Y:0 K:100  0,200 mm
          </OutlineInfo>
        </Status>
      </Shell>
    </>
  );
}
